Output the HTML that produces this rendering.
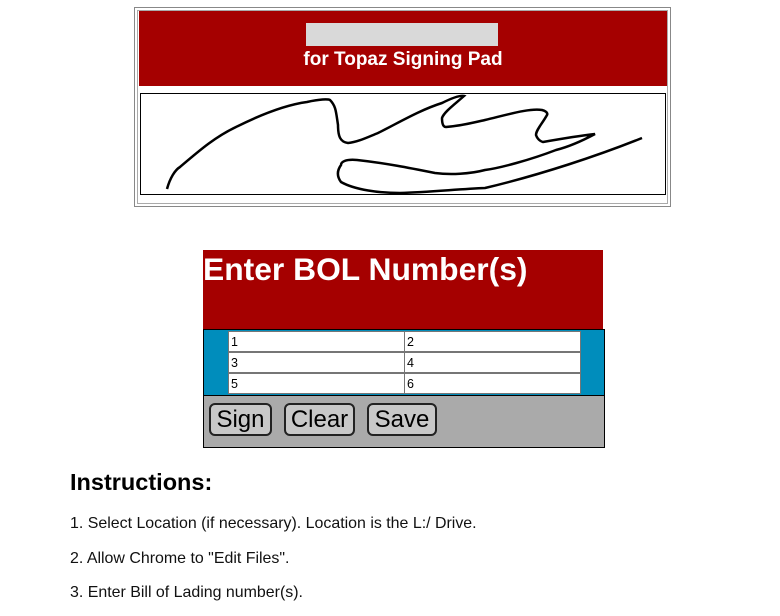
<!DOCTYPE html>
<html><head><meta charset="utf-8"><style>
body{margin:0;width:780px;height:616px;background:#fff;font-family:"Liberation Sans",Arial,sans-serif;position:relative;overflow:hidden}
.a{position:absolute}
.inp{position:absolute;background:#fff;border:1px solid #767676;box-sizing:border-box;height:21px;font-size:12.5px;padding:3px 0 0 2px;color:#000}
.btn{position:absolute;top:403px;height:33px;background:#c8c8c8;border:2px solid #222;border-radius:6px;box-sizing:border-box;font-size:24px;text-align:center;line-height:29px;color:#000}
p{position:absolute;left:70px;margin:0;font-size:15.95px;color:#111}
</style></head><body>
<div class="a" style="left:134px;top:7px;width:537px;height:200px;border:1px solid #888;box-sizing:border-box"></div>
<div class="a" style="left:137px;top:10px;width:531px;height:194px;border:1px solid #aaa;box-sizing:border-box"></div>
<div class="a" style="left:139px;top:11px;width:528px;height:75px;background:#a50000"></div>
<div class="a" style="left:306px;top:23px;width:192px;height:23px;background:#d9d9d9"></div>
<div class="a" style="left:139px;top:49px;width:528px;text-align:center;color:#fff;font-weight:bold;font-size:19px">for Topaz Signing Pad</div>
<div class="a" style="left:140px;top:93px;width:526px;height:102px;border:1px solid #000;box-sizing:border-box"></div>
<svg class="a" style="left:0;top:0" width="780" height="616"><path d="M167,189 C170,178 175,170 180,167 C200,150 215,137 236,127 C260,115 285,105 307,102 C320,99 328,99 330,100 C336,106 336,112 338,125 C338,136 340,142 348,143 C358,142 368,137 378,133 C400,122 420,110 442,103 C452,98 460,95 464,96 C455,104 444,112 442,118 C442,125 444,127 446,127 C460,126 472,123 485,120 C510,114 530,108 542,110 C549,112 547,115 547,115 C542,124 536,130 536,135 C538,141 543,142 543,142 C560,139 578,136 595,134 C580,142 568,147 556,150 C530,160 500,168 485,170 C470,174 450,175 435,173 C410,168 385,163 357,160 C345,159 341,162 341,165 C336,172 338,178 341,182 C355,190 380,193 400,193 C430,192 460,189 485,188 C540,175 600,155 642,138" fill="none" stroke="#000" stroke-width="2.5"/></svg>
<div class="a" style="left:203px;top:250px;width:400px;height:79px;background:#a50000"></div>
<div class="a" style="left:203px;top:251px;color:#fff;font-weight:bold;font-size:31.8px">Enter BOL Number(s)</div>
<div class="a" style="left:203px;top:329px;width:402px;height:67px;background:#008dbc;border:1px solid #000;box-sizing:border-box"></div>
<div class="inp" style="left:228px;top:331px;width:177px">1</div>
<div class="inp" style="left:404px;top:331px;width:177px">2</div>
<div class="inp" style="left:228px;top:352px;width:177px">3</div>
<div class="inp" style="left:404px;top:352px;width:177px">4</div>
<div class="inp" style="left:228px;top:373px;width:177px">5</div>
<div class="inp" style="left:404px;top:373px;width:177px">6</div>
<div class="a" style="left:203px;top:395px;width:402px;height:53px;background:#aaa;border:1px solid #000;box-sizing:border-box"></div>
<div class="btn" style="left:209px;width:63px">Sign</div>
<div class="btn" style="left:284px;width:71px">Clear</div>
<div class="btn" style="left:367px;width:70px">Save</div>
<div class="a" style="left:70px;top:469px;font-weight:bold;font-size:23.5px;color:#000">Instructions:</div>
<p style="top:515px">1. Select Location (if necessary). Location is the L:/ Drive.</p>
<p style="top:550px">2. Allow Chrome to "Edit Files".</p>
<p style="top:584px">3. Enter Bill of Lading number(s).</p>
</body></html>
